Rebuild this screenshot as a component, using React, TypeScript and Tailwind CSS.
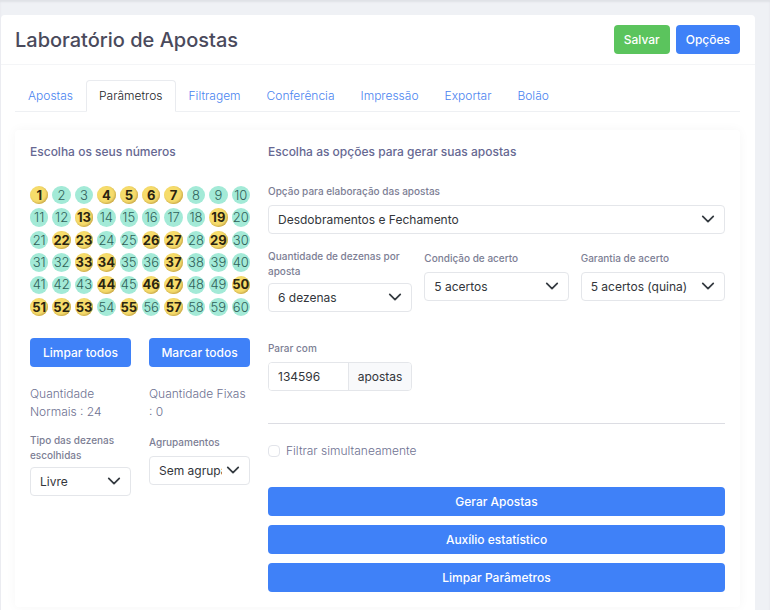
import { useState } from 'react'
import type { ReactNode } from 'react'

const TABS = ['Apostas', 'Parâmetros', 'Filtragem', 'Conferência', 'Impressão', 'Exportar', 'Bolão']

const NUMBERS = Array.from({ length: 60 }, (_, i) => i + 1)

const INITIAL_PICKS = [
  1, 4, 5, 6, 7, 13, 19, 22, 23, 26, 27, 29, 33, 34, 37, 44, 46, 47, 50, 51, 52, 53, 55, 57,
]

function Button({
  children,
  className = 'bg-[#3f81f8]',
  onClick,
}: {
  children: ReactNode
  className?: string
  onClick?: () => void
}) {
  return (
    <button
      type="button"
      onClick={onClick}
      className={`h-[29px] whitespace-nowrap rounded px-2.5 text-xs font-medium text-white ${className}`}
    >
      {children}
    </button>
  )
}

function Label({ htmlFor, children }: { htmlFor: string; children: ReactNode }) {
  return (
    <label
      htmlFor={htmlFor}
      className="mb-1 flex min-h-[19px] items-center text-[10px] font-medium leading-[15px] text-[#7c7e94]"
    >
      {children}
    </label>
  )
}

function SelectField({ id, label, options }: { id: string; label: string; options: string[] }) {
  return (
    <div className="min-w-0">
      <Label htmlFor={id}>{label}</Label>
      <div className="relative">
        <select
          id={id}
          className="block h-[29px] w-full appearance-none rounded border border-[#e4e6ea] bg-white pl-[9px] pr-[27px] text-xs text-[#33363b]"
        >
          {options.map((option) => (
            <option key={option}>{option}</option>
          ))}
        </select>
        <svg
          viewBox="0 0 16 16"
          className="pointer-events-none absolute right-2.5 top-[7px] size-3.5"
          fill="none"
          stroke="#343a40"
          strokeWidth="2"
          strokeLinecap="round"
          strokeLinejoin="round"
        >
          <path d="m2 5 6 6 6-6" />
        </svg>
      </div>
    </div>
  )
}

function NumberPicker({ picks, onToggle }: { picks: number[]; onToggle: (n: number) => void }) {
  return (
    <div className="grid grid-cols-10 gap-1">
      {NUMBERS.map((n) => (
        <button
          key={n}
          type="button"
          aria-pressed={picks.includes(n)}
          onClick={() => onToggle(n)}
          className={`flex aspect-square min-w-0 items-center justify-center rounded-full text-[13px] leading-none ${
            picks.includes(n)
              ? 'bg-[#f6dc6b] font-bold text-[#2b2410] shadow-[inset_-1px_-1px_2px_#c9a94c]'
              : 'bg-[#a3ead7] font-light text-[#2f6159]'
          }`}
        >
          {n}
        </button>
      ))}
    </div>
  )
}

export default function App() {
  const [tab, setTab] = useState('Parâmetros')
  const [picks, setPicks] = useState(INITIAL_PICKS)

  const toggle = (n: number) =>
    setPicks((list) => (list.includes(n) ? list.filter((p) => p !== n) : [...list, n]))

  return (
    <div className="min-h-screen bg-[#eff1f5] pl-px pr-[15px] font-['Inter',sans-serif] text-xs text-[#6e7191] shadow-[inset_0_2px_2px_#dfe1e6]">
      <div className="pt-[15px]">
        <main className="rounded bg-white pb-[15px]">
          <header className="flex items-center justify-between border-b border-[#f4f5f7] py-2.5 pl-3.5 pr-[15px]">
            <h1 className="text-xl font-medium leading-6 text-[#4a4a5c]">Laboratório de Apostas</h1>
            <div className="flex gap-1.5">
              <Button className="bg-[#5bc45d]">Salvar</Button>
              <Button>Opções</Button>
            </div>
          </header>

          <div className="pl-3.5 pr-[15px] pt-[15px]">
            <nav className="flex border-b border-[#eef0f3]">
              {TABS.map((name) => (
                <a
                  key={name}
                  href="#"
                  onClick={() => setTab(name)}
                  className={`-mb-px rounded-t border px-3 py-1.5 font-light leading-[18px] ${
                    tab === name
                      ? 'border-[#e9ebef] border-b-white bg-white text-[#22252a]'
                      : 'border-transparent text-[#4a84f0]'
                  }`}
                >
                  {name}
                </a>
              ))}
            </nav>

            <section className="mt-[18px] grid grid-cols-[220fr_457fr] gap-[18px] rounded p-[15px] shadow-[0_0_12px_rgba(0,0,0,0.04)]">
              <div className="min-w-0">
                <h2 className="font-medium leading-[14px] text-[#666892]">Escolha os seus números</h2>
                <div className="mt-[27px]">
                  <NumberPicker picks={picks} onToggle={toggle} />
                </div>

                <div className="mt-[22px] grid grid-cols-2 gap-x-[18px]">
                  <Button onClick={() => setPicks([])}>Limpar todos</Button>
                  <Button onClick={() => setPicks(NUMBERS)}>Marcar todos</Button>
                  <p className="mt-[18px] font-light leading-[18px]">{`Quantidade Normais : ${picks.length}`}</p>
                  <p className="mt-[18px] font-light leading-[18px]">Quantidade Fixas : 0</p>
                </div>
                <div className="mt-3 grid grid-cols-2 gap-x-[18px]">
                  <SelectField id="tipo" label="Tipo das dezenas escolhidas" options={['Livre', 'Fixas']} />
                  <SelectField id="grupos" label="Agrupamentos" options={['Sem agrupamento', 'Com agrupamento']} />
                </div>
              </div>

              <div className="min-w-0">
                <h2 className="mb-[23px] font-medium leading-[14px] text-[#666892]">
                  Escolha as opções para gerar suas apostas
                </h2>
                <SelectField
                  id="opcao"
                  label="Opção para elaboração das apostas"
                  options={['Desdobramentos e Fechamento', 'Aleatório']}
                />
                <div className="mt-[15px] grid grid-cols-3 gap-x-3 gap-y-[27px]">
                  <SelectField id="quantidade" label="Quantidade de dezenas por aposta" options={['6 dezenas', '7 dezenas']} />
                  <SelectField id="condicao" label="Condição de acerto" options={['5 acertos', '6 acertos']} />
                  <SelectField id="garantia" label="Garantia de acerto" options={['5 acertos (quina)', '4 acertos (quadra)']} />
                  <div className="min-w-0">
                    <Label htmlFor="parar">Parar com</Label>
                    <div className="flex h-[29px] overflow-hidden rounded border border-[#e4e6ea] text-[#33363b]">
                      <input id="parar" defaultValue="134596" className="w-0 grow bg-white pl-[9px]" />
                      <span className="border-l border-[#e4e6ea] bg-[#f8f9fb] px-[9px] leading-[27px]">apostas</span>
                    </div>
                  </div>
                </div>

                <hr className="mt-8 border-[#dcdde3]" />
                <label className="mt-[18px] flex items-center gap-1.5 font-light leading-[18px]">
                  <input type="checkbox" className="size-3 appearance-none rounded-sm border border-[#e2e4ea] bg-white checked:bg-[#3f81f8]" />
                  Filtrar simultaneamente
                </label>

                <div className="mt-[27px] flex flex-col gap-[9px]">
                  <Button>Gerar Apostas</Button>
                  <Button>Auxílio estatístico</Button>
                  <Button>Limpar Parâmetros</Button>
                </div>
              </div>
            </section>
          </div>
        </main>
      </div>
    </div>
  )
}
